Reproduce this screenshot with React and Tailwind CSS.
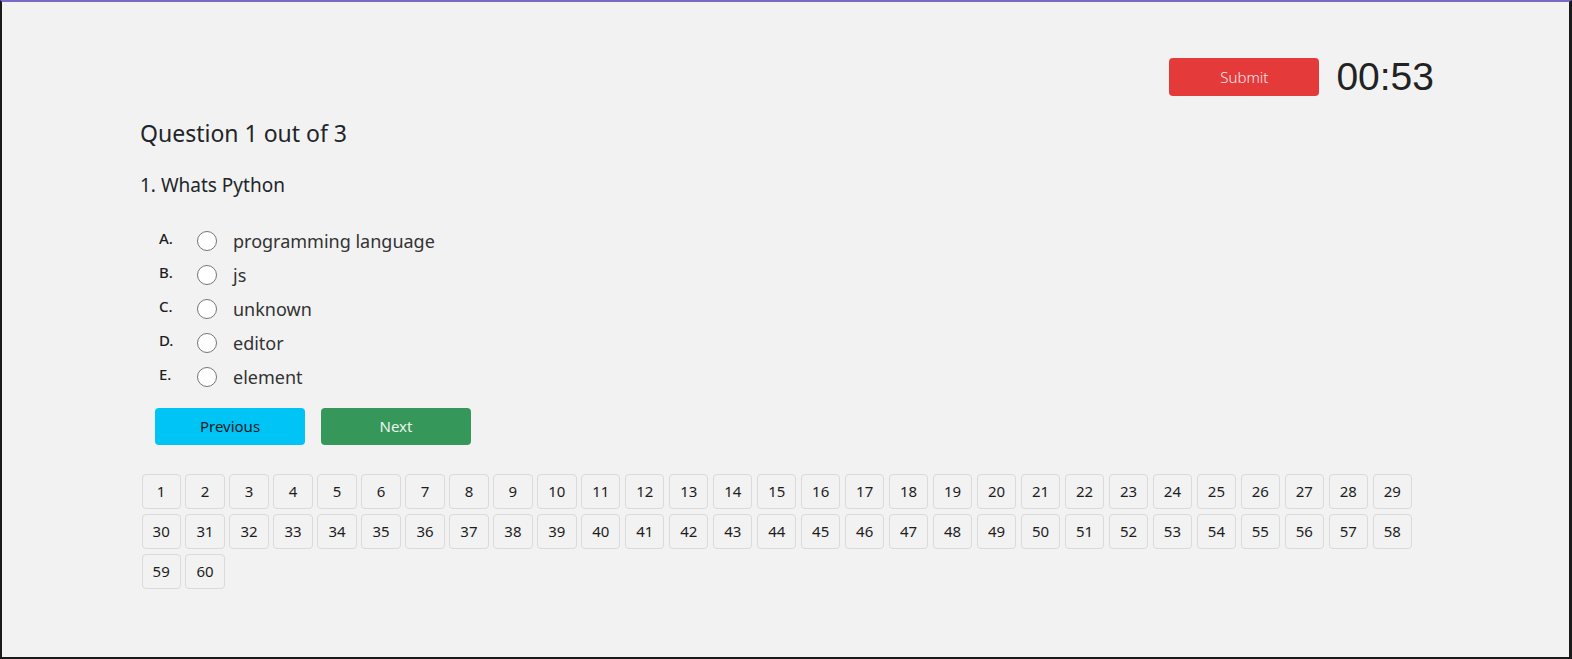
import React from "react";

const options = [
  { l: "A.", t: "programming language" },
  { l: "B.", t: "js" },
  { l: "C.", t: "unknown" },
  { l: "D.", t: "editor" },
  { l: "E.", t: "element" },
];

const nums = Array.from({ length: 60 }, (_, i) => i + 1);

export default function App() {
  return (
    <div
      className="h-[659px] w-full overflow-hidden border-t-2 border-t-[#7b68c9] border-l-2 border-l-[#1a1a1a] border-r-[3px] border-r-[#1a1a1a] border-b-2 border-b-[#1a1a1a] bg-[#f2f2f2] text-[#212529]"
      style={{ fontFamily: '"Noto Sans", "Open Sans", sans-serif' }}
    >
      <div className="ml-[138px] w-[1294px] pt-[56px]">
        <div className="flex items-center justify-end">
          <button className="h-[38px] w-[150px] rounded-[4px] bg-[#e53a3a] text-[15px] font-light text-[#fde8ee]">
            Submit
          </button>
          <div
            className="ml-[17px] text-[39px] leading-[38px] text-[#222]"
            style={{ fontFamily: '"Liberation Sans", Arial, sans-serif' }}
          >
            00:53
          </div>
        </div>

        <div className="mt-[22px] text-[23px] leading-[31px]">Question 1 out of 3</div>
        <div className="mt-[23px] text-[19px] leading-[27px]">1. Whats Python</div>

        <div className="mt-[25px] pl-[19px]">
          {options.map((o) => (
            <div key={o.l} className="flex h-[34px] items-center">
              <span className="-mt-[6px] w-[15px] text-[15px] font-medium leading-none text-[#1d1d1d]">{o.l}</span>
              <span className="ml-[23px] h-[20px] w-[20px] rounded-full border border-[#767676] bg-white" />
              <span className="ml-[16px] text-[18px] text-[#333]">{o.t}</span>
            </div>
          ))}
        </div>

        <div className="mt-[14px] flex gap-[16px] pl-[15px]">
          <button className="h-[37px] w-[150px] rounded-[4px] bg-[#00c3f6] text-[15px] text-[#1b1b1b]">
            Previous
          </button>
          <button className="h-[37px] w-[150px] rounded-[4px] bg-[#36975a] text-[15px] text-[#eaf6ee]">
            Next
          </button>
        </div>

        <div className="mt-[29px] flex flex-wrap gap-x-[4.68px] gap-y-[5px] pl-[1.5px]">
          {nums.map((n) => (
            <div
              key={n}
              className="flex h-[35px] w-[39.3px] items-center justify-center rounded-[4px] border border-[#dadada] text-[15px] text-[#1d1d1d]"
            >
              {n}
            </div>
          ))}
        </div>
      </div>
    </div>
  );
}
